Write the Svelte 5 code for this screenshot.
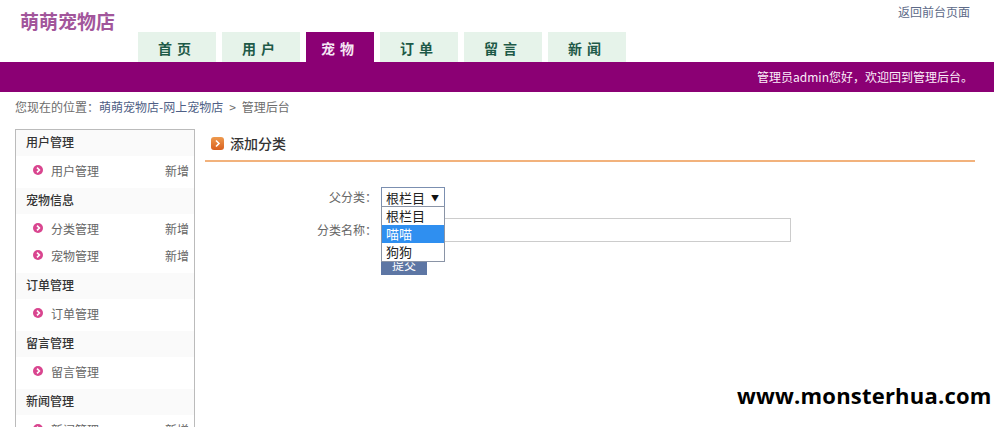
<script>
  const tabs = [
    { name: "首 页", width: 78 },
    { name: "用 户", width: 78 },
    { name: "宠 物", width: 68, active: true },
    { name: "订 单", width: 78 },
    { name: "留 言", width: 78 },
    { name: "新 闻", width: 78 }
  ];

  const groups = [
    { title: "用户管理", items: [{ name: "用户管理", add: true }] },
    { title: "宠物信息", items: [{ name: "分类管理", add: true }, { name: "宠物管理", add: true }] },
    { title: "订单管理", items: [{ name: "订单管理" }] },
    { title: "留言管理", items: [{ name: "留言管理" }] },
    { title: "新闻管理", items: [{ name: "新闻管理", add: true }] }
  ];

  const options = ["根栏目", "喵喵", "狗狗"];
</script>

<div class="page">
  <header class="top">
    <div class="logo">萌萌宠物店</div>
    <nav class="tabs">
      {#each tabs as tab}
        <a class="tab" class:active={tab.active} style="width: {tab.width}px">{tab.name}</a>
      {/each}
    </nav>
    <a class="back">返回前台页面</a>
  </header>

  <div class="band">管理员admin您好，欢迎回到管理后台。</div>

  <div class="crumbs">您现在的位置：<a>萌萌宠物店-网上宠物店</a><span class="sep">&gt;</span>管理后台</div>

  <div class="main">
    <aside class="side">
      {#each groups as group}
        <h4>{group.title}</h4>
        <ul>
          {#each group.items as item}
            <li>
              <svg class="dot" viewBox="0 0 10 10" width="10" height="10">
                <circle cx="5" cy="5" r="5" fill="#d9458f" />
                <path d="M4 2.6 6.4 5 4 7.4" fill="none" stroke="#fff" stroke-width="1.6" />
              </svg>
              <span class="name">{item.name}</span>
              {#if item.add}<span class="add">新增</span>{/if}
            </li>
          {/each}
        </ul>
      {/each}
    </aside>

    <section class="content">
      <div class="title">
        <svg viewBox="0 0 13 13" width="13" height="13">
          <defs>
            <linearGradient id="tile" x1="0" y1="0" x2="0" y2="1">
              <stop offset="0" stop-color="#ee9a4e" />
              <stop offset="1" stop-color="#d9601f" />
            </linearGradient>
          </defs>
          <rect width="13" height="13" rx="3" fill="url(#tile)" />
          <path d="M5 3.5 8 6.5 5 9.5" fill="none" stroke="#fff" stroke-width="1.6" />
        </svg>
        <span>添加分类</span>
      </div>

      <form class="form">
        <div class="row first">
          <label>父分类：</label>
          <div class="select">
            <span>根栏目</span><i>▼</i>
            <div class="menu">
              {#each options as option, i}
                <div class="option" class:hover={i === 1}>{option}</div>
              {/each}
            </div>
          </div>
        </div>
        <div class="row second">
          <label>分类名称：</label>
          <div class="input"></div>
        </div>
        <div class="row third">
          <label></label>
          <div class="submit">提交</div>
        </div>
      </form>
    </section>
  </div>

  <div class="mark">www.monsterhua.com</div>
</div>

<style>
  :global(body) {
    margin: 0;
    overflow: hidden;
    background: #fff;
  }

  .page {
    position: relative;
    height: 427px;
    overflow: hidden;
    font-family: "Noto Sans CJK SC", "Liberation Sans", sans-serif;
    font-size: 12px;
    color: #666;
  }

  .top {
    display: flex;
    height: 62px;
    position: relative;
  }

  .logo {
    position: absolute;
    left: 20px;
    top: 7px;
    font-size: 19px;
    line-height: 28px;
    font-weight: 700;
    color: #a2569b;
  }

  .tabs {
    display: flex;
    gap: 6px;
    margin-left: 138px;
    margin-top: 32px;
  }

  .tab {
    box-sizing: border-box;
    height: 30px;
    padding-right: 4px;
    line-height: 33px;
    text-align: center;
    font-size: 14px;
    font-weight: 700;
    letter-spacing: 1px;
    color: #1e5a48;
    background: #e6f3ea;
  }

  .tab.active {
    background: #8b0074;
    color: #f6e6f4;
  }

  .back {
    margin-left: auto;
    margin-right: 24px;
    margin-top: 3px;
    line-height: 18px;
    color: #5c6a88;
  }

  .band {
    height: 30px;
    line-height: 29px;
    padding-right: 21px;
    text-align: right;
    color: #fbeef9;
    background: #8b0074;
  }

  .crumbs {
    height: 37px;
    padding-left: 15px;
    line-height: 30px;
    color: #6c6c6c;
  }

  .crumbs a {
    color: #4f5f86;
  }

  .sep {
    margin: 0 6px;
  }

  .main {
    display: flex;
    align-items: flex-start;
    gap: 10px;
    padding-left: 15px;
  }

  .side {
    flex: none;
    width: 178px;
    border: 1px solid #bbb;
  }

  h4 {
    margin: 0;
    height: 26px;
    padding-left: 10px;
    line-height: 23px;
    font-size: 12px;
    font-weight: 500;
    color: #333;
    background: #fafafa;
  }

  ul {
    margin: 0;
    padding: 2px 0 3px;
    list-style: none;
  }

  li {
    display: flex;
    align-items: center;
    box-sizing: border-box;
    height: 27px;
    padding: 0 5px 2px 17px;
  }

  .dot {
    margin-top: -1px;
  }

  .name {
    margin-left: 8px;
  }

  .add {
    margin-left: auto;
  }

  .content {
    flex: none;
    width: 770px;
  }

  .title {
    display: flex;
    align-items: center;
    gap: 6px;
    height: 28px;
    padding-left: 6px;
    padding-bottom: 3px;
    border-bottom: 2px solid #f2b27c;
    font-size: 14px;
    font-weight: 500;
    color: #333;
  }

  .form {
    padding-top: 25px;
  }

  .row {
    display: flex;
  }

  .row label {
    flex: none;
    width: 172px;
    text-align: right;
    line-height: 20px;
    margin-right: 4px;
  }

  .second {
    margin-top: 11px;
  }

  .second label {
    line-height: 24px;
  }

  .third {
    margin-top: 13px;
  }

  .select {
    position: relative;
    box-sizing: border-box;
    display: flex;
    justify-content: space-between;
    width: 64px;
    height: 20px;
    padding: 0 5px 0 4px;
    border: 1px solid #7b8fb0;
    font-size: 13px;
    line-height: 19px;
    color: #222;
    background: #fff;
  }

  .select i {
    font-style: normal;
    font-size: 8px;
    color: #111;
  }

  .menu {
    position: absolute;
    left: -1px;
    top: 18px;
    z-index: 2;
    width: 62px;
    border: 1px solid #8a94a6;
    background: #fff;
  }

  .option {
    height: 18px;
    padding-left: 4px;
    line-height: 17px;
    font-size: 13px;
  }

  .option.hover {
    background: #2f8ff0;
    color: #fff;
  }

  .input {
    box-sizing: border-box;
    width: 410px;
    height: 24px;
    border: 1px solid #ccc;
  }

  .submit {
    box-sizing: border-box;
    width: 46px;
    height: 20px;
    line-height: 20px;
    text-align: center;
    color: #fff;
    background: #5d76a4;
  }

  .mark {
    position: absolute;
    left: 737px;
    top: 380px;
    font-family: "Open Sans", sans-serif;
    font-size: 22px;
    line-height: 30px;
    font-weight: 700;
    letter-spacing: 0.2px;
    color: #000;
  }
</style>
